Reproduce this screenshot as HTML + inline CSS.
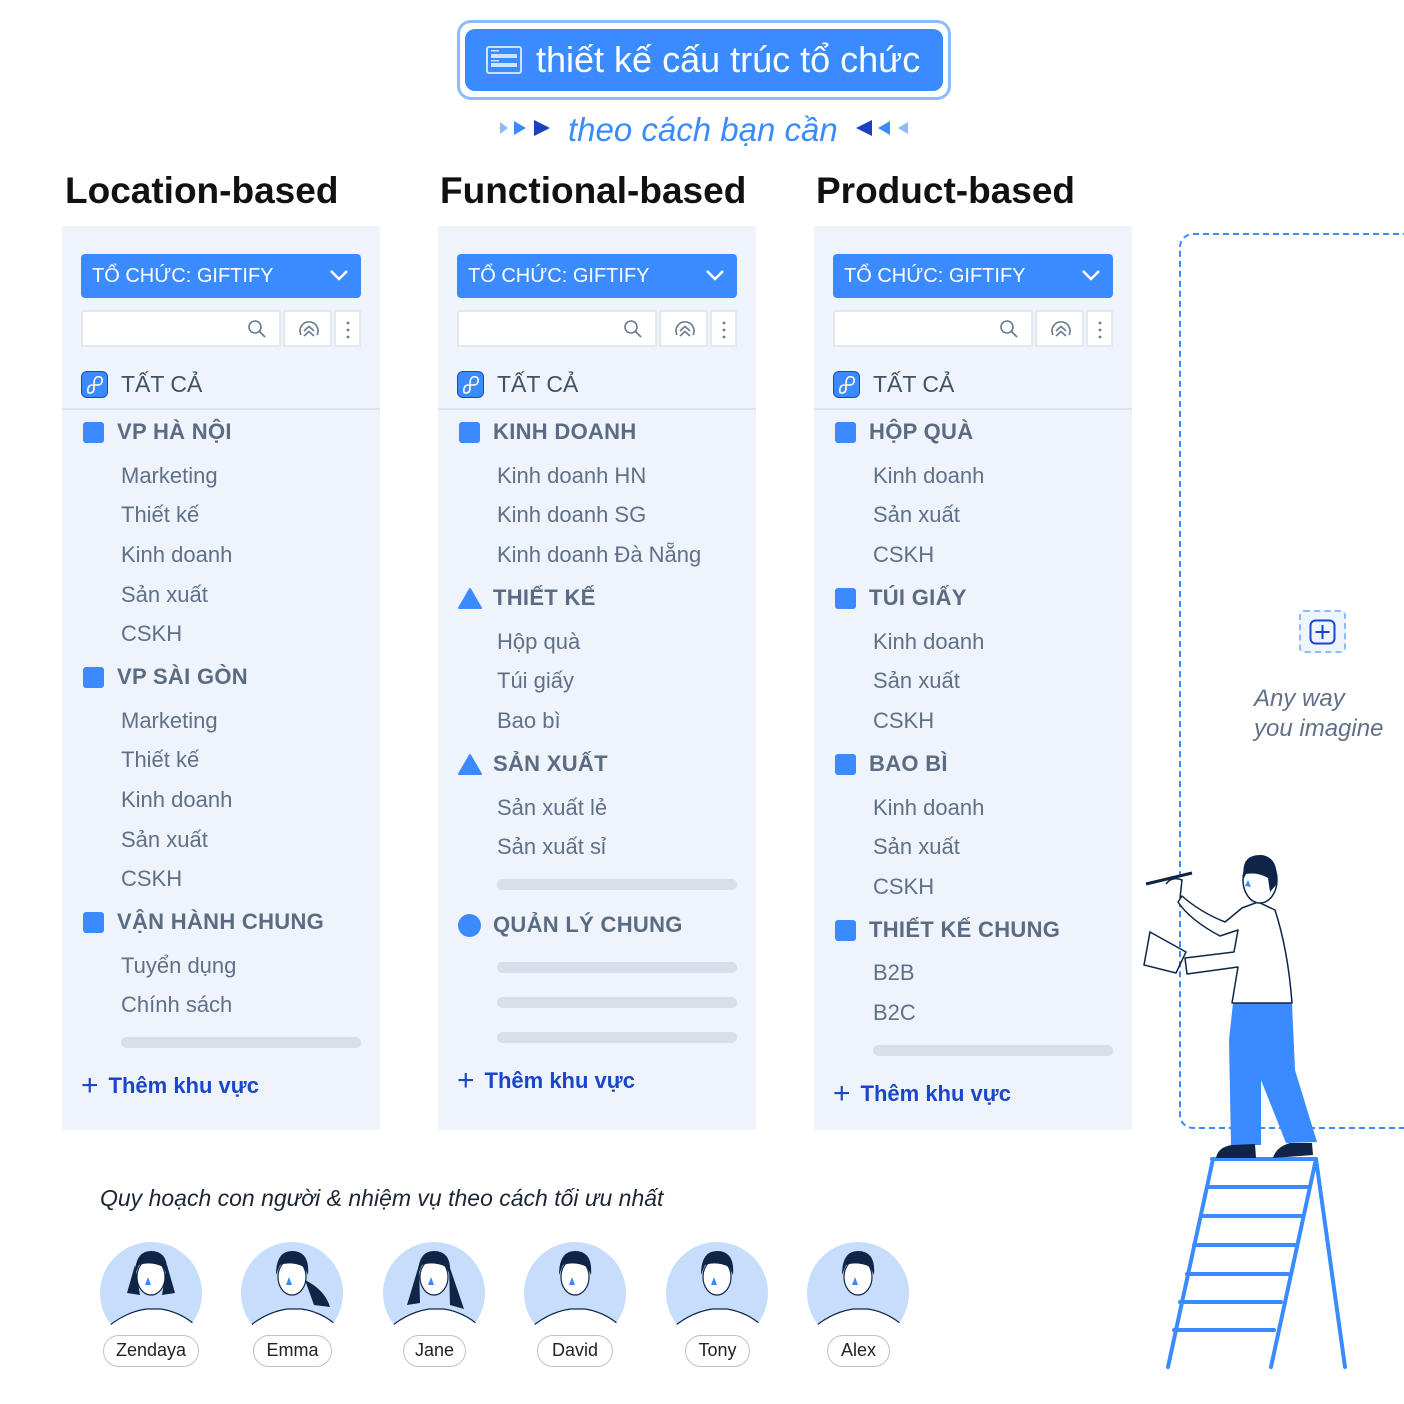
<!DOCTYPE html>
<html><head><meta charset="utf-8">
<style>
*{margin:0;padding:0;box-sizing:border-box}
body{width:1404px;height:1404px;background:#fff;position:relative;overflow:hidden;font-family:"Liberation Sans","DejaVu Sans",sans-serif}
.a{position:absolute;white-space:nowrap}
.panel{position:absolute;top:226px;width:318px;height:904px;background:#eff3fc;white-space:nowrap}
.dd{position:absolute;left:19px;top:28px;width:280px;height:44px;background:#3a8bff;border-radius:4px;color:#fff;font-size:20px;line-height:44px;padding-left:11px}
.dd svg{position:absolute;right:12px;top:14px}
.sr{position:absolute;top:84px;height:37px;background:#fff;border:2px solid #e4e8ef}
.all{position:absolute;left:19px;top:144px;width:250px;height:28px;font-size:23px;color:#3f5266;line-height:28px}
.all i{position:absolute;left:0;top:1px;width:27px;height:27px;background:#3a8bff;border:1.5px solid #1a47c9;border-radius:6px}
.all span{position:absolute;left:40px;white-space:nowrap}
.div{position:absolute;left:0;top:182px;width:318px;height:2px;background:#dde3ee}
.h{position:absolute;left:55px;font-size:22px;color:#5a6b82;line-height:30px;font-weight:bold;letter-spacing:.3px}
.c{position:absolute;left:59px;font-size:22px;color:#607088;line-height:30px}
.sq{position:absolute;left:21px;width:21px;height:21px;background:#3a8bff;border-radius:3px}
.bar{position:absolute;left:59px;width:240px;height:11px;background:#d8deea;border-radius:6px}
.add{position:absolute;left:19px;font-size:22px;color:#1a47c9;line-height:30px;font-weight:bold}
.add b{font-weight:normal;font-size:30px;position:relative;top:2px;margin-right:10px}
.ttl{position:absolute;top:170px;font-size:37px;color:#111;font-weight:bold;white-space:nowrap}
.pill{position:absolute;top:1335px;height:32px;border:1.5px solid #b9c3d3;border-radius:16px;background:#fff;font-size:18px;color:#222;line-height:29px;text-align:center}
</style></head><body>

<div class="a" style="left:457px;top:20px;width:494px;height:80px;border:3px solid #8cbcff;border-radius:14px;background:#fff"></div>
<div class="a" style="left:465px;top:29px;width:478px;height:62px;background:#3a8bff;border-radius:10px"></div>
<svg class="a" style="left:486px;top:46px" width="36" height="28"><rect x="1" y="1" width="34" height="26" rx="2" fill="none" stroke="#cfe2ff" stroke-width="2"/><rect x="5" y="8" width="26" height="4" fill="#cfe2ff"/><rect x="5" y="17" width="26" height="4" fill="#cfe2ff"/><rect x="5" y="4" width="8" height="1.5" fill="#cfe2ff"/><rect x="5" y="14" width="8" height="1.5" fill="#cfe2ff"/></svg>
<div class="a" style="left:536px;top:37px;font-size:36px;color:#fff;line-height:46px">thiết kế cấu trúc tổ chức</div>
<svg class="a" style="left:498px;top:118px" width="60" height="20"><polygon points="2,4 10,10 2,16" fill="#8cbcff"/><polygon points="16,3 28,10 16,17" fill="#3a8bff"/><polygon points="36,2 52,10 36,18" fill="#1a3fc0"/></svg>
<div class="a" style="left:568px;top:108px;font-size:33px;color:#3a8bff;font-style:italic;line-height:44px">theo cách bạn cần</div>
<svg class="a" style="left:852px;top:118px" width="60" height="20"><polygon points="20,2 4,10 20,18" fill="#1a3fc0"/><polygon points="38,3 26,10 38,17" fill="#3a8bff"/><polygon points="56,4 46,10 56,16" fill="#8cbcff"/></svg>

<div class="ttl" style="left:65px">Location-based</div>
<div class="ttl" style="left:440px">Functional-based</div>
<div class="ttl" style="left:816px">Product-based</div>

<div class="panel" style="left:62px">
 <div class="dd">TỔ CHỨC: GIFTIFY<svg width="20" height="14"><path d="M2 3 L10 11 L18 3" fill="none" stroke="#fff" stroke-width="2.5"/></svg></div>
 <div class="sr" style="left:19px;width:200px"><svg style="position:absolute;right:12px;top:7px" width="20" height="20"><circle cx="8" cy="8" r="6" fill="none" stroke="#6b7a90" stroke-width="1.6"/><path d="M12.5 12.5 L18 18" stroke="#6b7a90" stroke-width="1.8"/></svg></div>
 <div class="sr" style="left:221px;width:49px"><svg style="position:absolute;left:12px;top:6px" width="24" height="24"><path d="M4 17 A9 9 0 1 1 20 17" fill="none" stroke="#6b7a90" stroke-width="1.6"/><path d="M7 13 L12 8.5 L17 13 M7 18 L12 13.5 L17 18" fill="none" stroke="#6b7a90" stroke-width="1.6"/></svg></div>
 <div class="sr" style="left:272px;width:27px"><svg style="position:absolute;left:10px;top:8px" width="4" height="20"><circle cx="2" cy="3" r="1.4" fill="#6b7a90"/><circle cx="2" cy="10" r="1.4" fill="#6b7a90"/><circle cx="2" cy="17" r="1.4" fill="#6b7a90"/></svg></div>
 <div class="all"><i></i><svg style="position:absolute;left:4px;top:5px" width="20" height="20"><path d="M3 17 Q2 10 8 10 L12 10 Q18 10 17 4 Q16 1 12 2 Q9 3 9 9 L9 13 Q9 18 5 18 Q3 18 3 17" fill="none" stroke="#fff" stroke-width="1.6"/></svg><span>TẤT CẢ</span></div>
 <div class="div"></div>
 <div class="sq" style="top:196px"></div><div class="h" style="top:191px">VP HÀ NỘI</div>
 <div class="c" style="top:235px">Marketing</div><div class="c" style="top:274px">Thiết kế</div><div class="c" style="top:314px">Kinh doanh</div><div class="c" style="top:354px">Sản xuất</div><div class="c" style="top:393px">CSKH</div>
 <div class="sq" style="top:441px"></div><div class="h" style="top:436px">VP SÀI GÒN</div>
 <div class="c" style="top:480px">Marketing</div><div class="c" style="top:519px">Thiết kế</div><div class="c" style="top:559px">Kinh doanh</div><div class="c" style="top:599px">Sản xuất</div><div class="c" style="top:638px">CSKH</div>
 <div class="sq" style="top:686px"></div><div class="h" style="top:681px">VẬN HÀNH CHUNG</div>
 <div class="c" style="top:725px">Tuyển dụng</div><div class="c" style="top:764px">Chính sách</div>
 <div class="bar" style="top:811px"></div>
 <div class="add" style="top:843px"><b>+</b>Thêm khu vực</div>
</div>

<div class="panel" style="left:438px">
 <div class="dd">TỔ CHỨC: GIFTIFY<svg width="20" height="14"><path d="M2 3 L10 11 L18 3" fill="none" stroke="#fff" stroke-width="2.5"/></svg></div>
 <div class="sr" style="left:19px;width:200px"><svg style="position:absolute;right:12px;top:7px" width="20" height="20"><circle cx="8" cy="8" r="6" fill="none" stroke="#6b7a90" stroke-width="1.6"/><path d="M12.5 12.5 L18 18" stroke="#6b7a90" stroke-width="1.8"/></svg></div>
 <div class="sr" style="left:221px;width:49px"><svg style="position:absolute;left:12px;top:6px" width="24" height="24"><path d="M4 17 A9 9 0 1 1 20 17" fill="none" stroke="#6b7a90" stroke-width="1.6"/><path d="M7 13 L12 8.5 L17 13 M7 18 L12 13.5 L17 18" fill="none" stroke="#6b7a90" stroke-width="1.6"/></svg></div>
 <div class="sr" style="left:272px;width:27px"><svg style="position:absolute;left:10px;top:8px" width="4" height="20"><circle cx="2" cy="3" r="1.4" fill="#6b7a90"/><circle cx="2" cy="10" r="1.4" fill="#6b7a90"/><circle cx="2" cy="17" r="1.4" fill="#6b7a90"/></svg></div>
 <div class="all"><i></i><svg style="position:absolute;left:4px;top:5px" width="20" height="20"><path d="M3 17 Q2 10 8 10 L12 10 Q18 10 17 4 Q16 1 12 2 Q9 3 9 9 L9 13 Q9 18 5 18 Q3 18 3 17" fill="none" stroke="#fff" stroke-width="1.6"/></svg><span>TẤT CẢ</span></div>
 <div class="div"></div>
 <div class="sq" style="top:196px"></div><div class="h" style="top:191px">KINH DOANH</div>
 <div class="c" style="top:235px">Kinh doanh HN</div><div class="c" style="top:274px">Kinh doanh SG</div><div class="c" style="top:314px">Kinh doanh Đà Nẵng</div>
 <svg class="a" style="left:19px;top:361px" width="26" height="23"><path d="M13 2 L24 21 L2 21 Z" fill="#3a8bff" stroke="#3a8bff" stroke-width="2" stroke-linejoin="round"/></svg><div class="h" style="top:357px">THIẾT KẾ</div>
 <div class="c" style="top:401px">Hộp quà</div><div class="c" style="top:440px">Túi giấy</div><div class="c" style="top:480px">Bao bì</div>
 <svg class="a" style="left:19px;top:527px" width="26" height="23"><path d="M13 2 L24 21 L2 21 Z" fill="#3a8bff" stroke="#3a8bff" stroke-width="2" stroke-linejoin="round"/></svg><div class="h" style="top:523px">SẢN XUẤT</div>
 <div class="c" style="top:567px">Sản xuất lẻ</div><div class="c" style="top:606px">Sản xuất sỉ</div>
 <div class="bar" style="top:653px"></div>
 <div class="a" style="left:20px;top:688px;width:23px;height:23px;border-radius:50%;background:#3a8bff"></div><div class="h" style="top:684px">QUẢN LÝ CHUNG</div>
 <div class="bar" style="top:736px"></div><div class="bar" style="top:771px"></div><div class="bar" style="top:806px"></div>
 <div class="add" style="top:838px"><b>+</b>Thêm khu vực</div>
</div>

<div class="panel" style="left:814px">
 <div class="dd">TỔ CHỨC: GIFTIFY<svg width="20" height="14"><path d="M2 3 L10 11 L18 3" fill="none" stroke="#fff" stroke-width="2.5"/></svg></div>
 <div class="sr" style="left:19px;width:200px"><svg style="position:absolute;right:12px;top:7px" width="20" height="20"><circle cx="8" cy="8" r="6" fill="none" stroke="#6b7a90" stroke-width="1.6"/><path d="M12.5 12.5 L18 18" stroke="#6b7a90" stroke-width="1.8"/></svg></div>
 <div class="sr" style="left:221px;width:49px"><svg style="position:absolute;left:12px;top:6px" width="24" height="24"><path d="M4 17 A9 9 0 1 1 20 17" fill="none" stroke="#6b7a90" stroke-width="1.6"/><path d="M7 13 L12 8.5 L17 13 M7 18 L12 13.5 L17 18" fill="none" stroke="#6b7a90" stroke-width="1.6"/></svg></div>
 <div class="sr" style="left:272px;width:27px"><svg style="position:absolute;left:10px;top:8px" width="4" height="20"><circle cx="2" cy="3" r="1.4" fill="#6b7a90"/><circle cx="2" cy="10" r="1.4" fill="#6b7a90"/><circle cx="2" cy="17" r="1.4" fill="#6b7a90"/></svg></div>
 <div class="all"><i></i><svg style="position:absolute;left:4px;top:5px" width="20" height="20"><path d="M3 17 Q2 10 8 10 L12 10 Q18 10 17 4 Q16 1 12 2 Q9 3 9 9 L9 13 Q9 18 5 18 Q3 18 3 17" fill="none" stroke="#fff" stroke-width="1.6"/></svg><span>TẤT CẢ</span></div>
 <div class="div"></div>
 <div class="sq" style="top:196px"></div><div class="h" style="top:191px">HỘP QUÀ</div>
 <div class="c" style="top:235px">Kinh doanh</div><div class="c" style="top:274px">Sản xuất</div><div class="c" style="top:314px">CSKH</div>
 <div class="sq" style="top:362px"></div><div class="h" style="top:357px">TÚI GIẤY</div>
 <div class="c" style="top:401px">Kinh doanh</div><div class="c" style="top:440px">Sản xuất</div><div class="c" style="top:480px">CSKH</div>
 <div class="sq" style="top:528px"></div><div class="h" style="top:523px">BAO BÌ</div>
 <div class="c" style="top:567px">Kinh doanh</div><div class="c" style="top:606px">Sản xuất</div><div class="c" style="top:646px">CSKH</div>
 <div class="sq" style="top:694px"></div><div class="h" style="top:689px">THIẾT KẾ CHUNG</div>
 <div class="c" style="top:732px">B2B</div><div class="c" style="top:772px">B2C</div>
 <div class="bar" style="top:819px"></div>
 <div class="add" style="top:851px"><b>+</b>Thêm khu vực</div>
</div>

<div class="a" style="left:1179px;top:233px;width:260px;height:896px;border:2px dashed #3a8bff;border-radius:14px"></div>
<div class="a" style="left:1299px;top:610px;width:47px;height:43px;border:2px dashed #8cbcff;border-radius:5px;background:#eef5ff"></div>
<svg class="a" style="left:1309px;top:619px" width="27" height="26"><rect x="1.5" y="1.5" width="24" height="23" rx="5" fill="none" stroke="#1a47c9" stroke-width="2"/><path d="M13.5 6 V20 M6.5 13 H20.5" stroke="#1a47c9" stroke-width="2"/></svg>
<div class="a" style="left:1254px;top:684px;font-size:24px;font-style:italic;color:#607088;line-height:30px">Any way<br>you imagine</div>

<svg class="a" style="left:1130px;top:840px" width="274" height="540">
 <g stroke="#3a8bff" stroke-width="4" stroke-linecap="round" fill="none">
  <path d="M83 319 L38 527 M186 319 L141 527 M186 319 L215 527 M82 319 H186"/>
  <path d="M77 347 H178 M71 376 H172 M64 405 H165 M57 434 H158 M50 462 H151 M44 490 H144"/>
 </g>
 <path d="M103 163 L162 163 L165 230 L187 302 L156 303 L131 240 L131 305 L101 305 L99 200 Z" fill="#3a8bff"/>
 <path d="M86 318 Q88 307 102 305 L125 304 L126 318 Z M143 318 Q146 307 160 303 L182 303 L183 315 Z" fill="#0e2548"/>
 <path d="M128 62 L112 68 Q100 78 95 82 Q70 72 52 56 L48 62 Q60 80 90 96 L108 90 L104 112 Q80 115 55 118 L57 134 L108 127 L102 163 L162 163 Q158 110 145 70 Z" fill="#fff" stroke="#0e2548" stroke-width="1.5" stroke-linejoin="round"/>
 <path d="M56 112 L20 92 L14 125 L46 133 Z" fill="none" stroke="#0e2548" stroke-width="1.5"/>
 <path d="M16 44 L62 33" stroke="#0e2548" stroke-width="3"/>
 <path d="M36 44 Q42 36 52 40 L50 58" fill="#fff" stroke="#0e2548" stroke-width="1.5"/>
 <ellipse cx="130" cy="40" rx="17" ry="23" fill="#fff" stroke="#0e2548" stroke-width="1.5"/>
 <path d="M114 38 Q110 14 132 15 Q150 18 146 45 L140 52 L138 38 Q128 32 116 34 Z" fill="#0e2548"/>
 <path d="M118 40 L121 47 L115 46 Z" fill="#3a8bff"/>
</svg>

<div class="a" style="left:100px;top:1182px;font-size:23px;font-style:italic;color:#1c2533;line-height:32px">Quy hoạch con người &amp; nhiệm vụ theo cách tối ưu nhất</div>

<svg class="a" style="left:0;top:1235px" width="960" height="110">
 <defs>
  <clipPath id="cc"><circle cx="0" cy="58" r="51"/><rect x="-40" y="85" width="80" height="30"/></clipPath>
  <g id="av">
  <circle cx="0" cy="58" r="51" fill="#c7ddfc"/>
  <g clip-path="url(#cc)"><path d="M-50 98 Q-30 78 -5 74 L10 74 Q35 78 52 98 L52 115 L-50 115 Z" fill="#fff" stroke="#0e2548" stroke-width="1.2"/></g>
  <ellipse cx="0" cy="42" rx="14" ry="18" fill="#fff" stroke="#0e2548" stroke-width="1.2"/>
  <path d="M-16 40 Q-16 16 0 16 Q18 16 16 40 L12 32 Q0 26 -12 30 Z" fill="#0e2548"/>
  <path d="M-3 42 L0 50 L-6 50 Z" fill="#3a8bff"/>
 </g></defs>
 <use href="#av" x="151"/><use href="#av" x="292"/><use href="#av" x="434"/><use href="#av" x="575"/><use href="#av" x="717"/><use href="#av" x="858"/>
 <path d="M135 30 L127 58 L140 60 Z M167 30 L175 58 L162 60 Z" fill="#0e2548"/>
 <path d="M305 45 Q325 55 330 72 L314 70 Z" fill="#0e2548"/>
 <path d="M419 30 L407 70 L420 68 Z M449 30 L464 74 L450 70 Z" fill="#0e2548"/>
</svg>
<div class="pill" style="left:103px;width:96px">Zendaya</div>
<div class="pill" style="left:253px;width:79px">Emma</div>
<div class="pill" style="left:403px;width:63px">Jane</div>
<div class="pill" style="left:537px;width:76px">David</div>
<div class="pill" style="left:685px;width:65px">Tony</div>
<div class="pill" style="left:827px;width:63px">Alex</div>
</body></html>
